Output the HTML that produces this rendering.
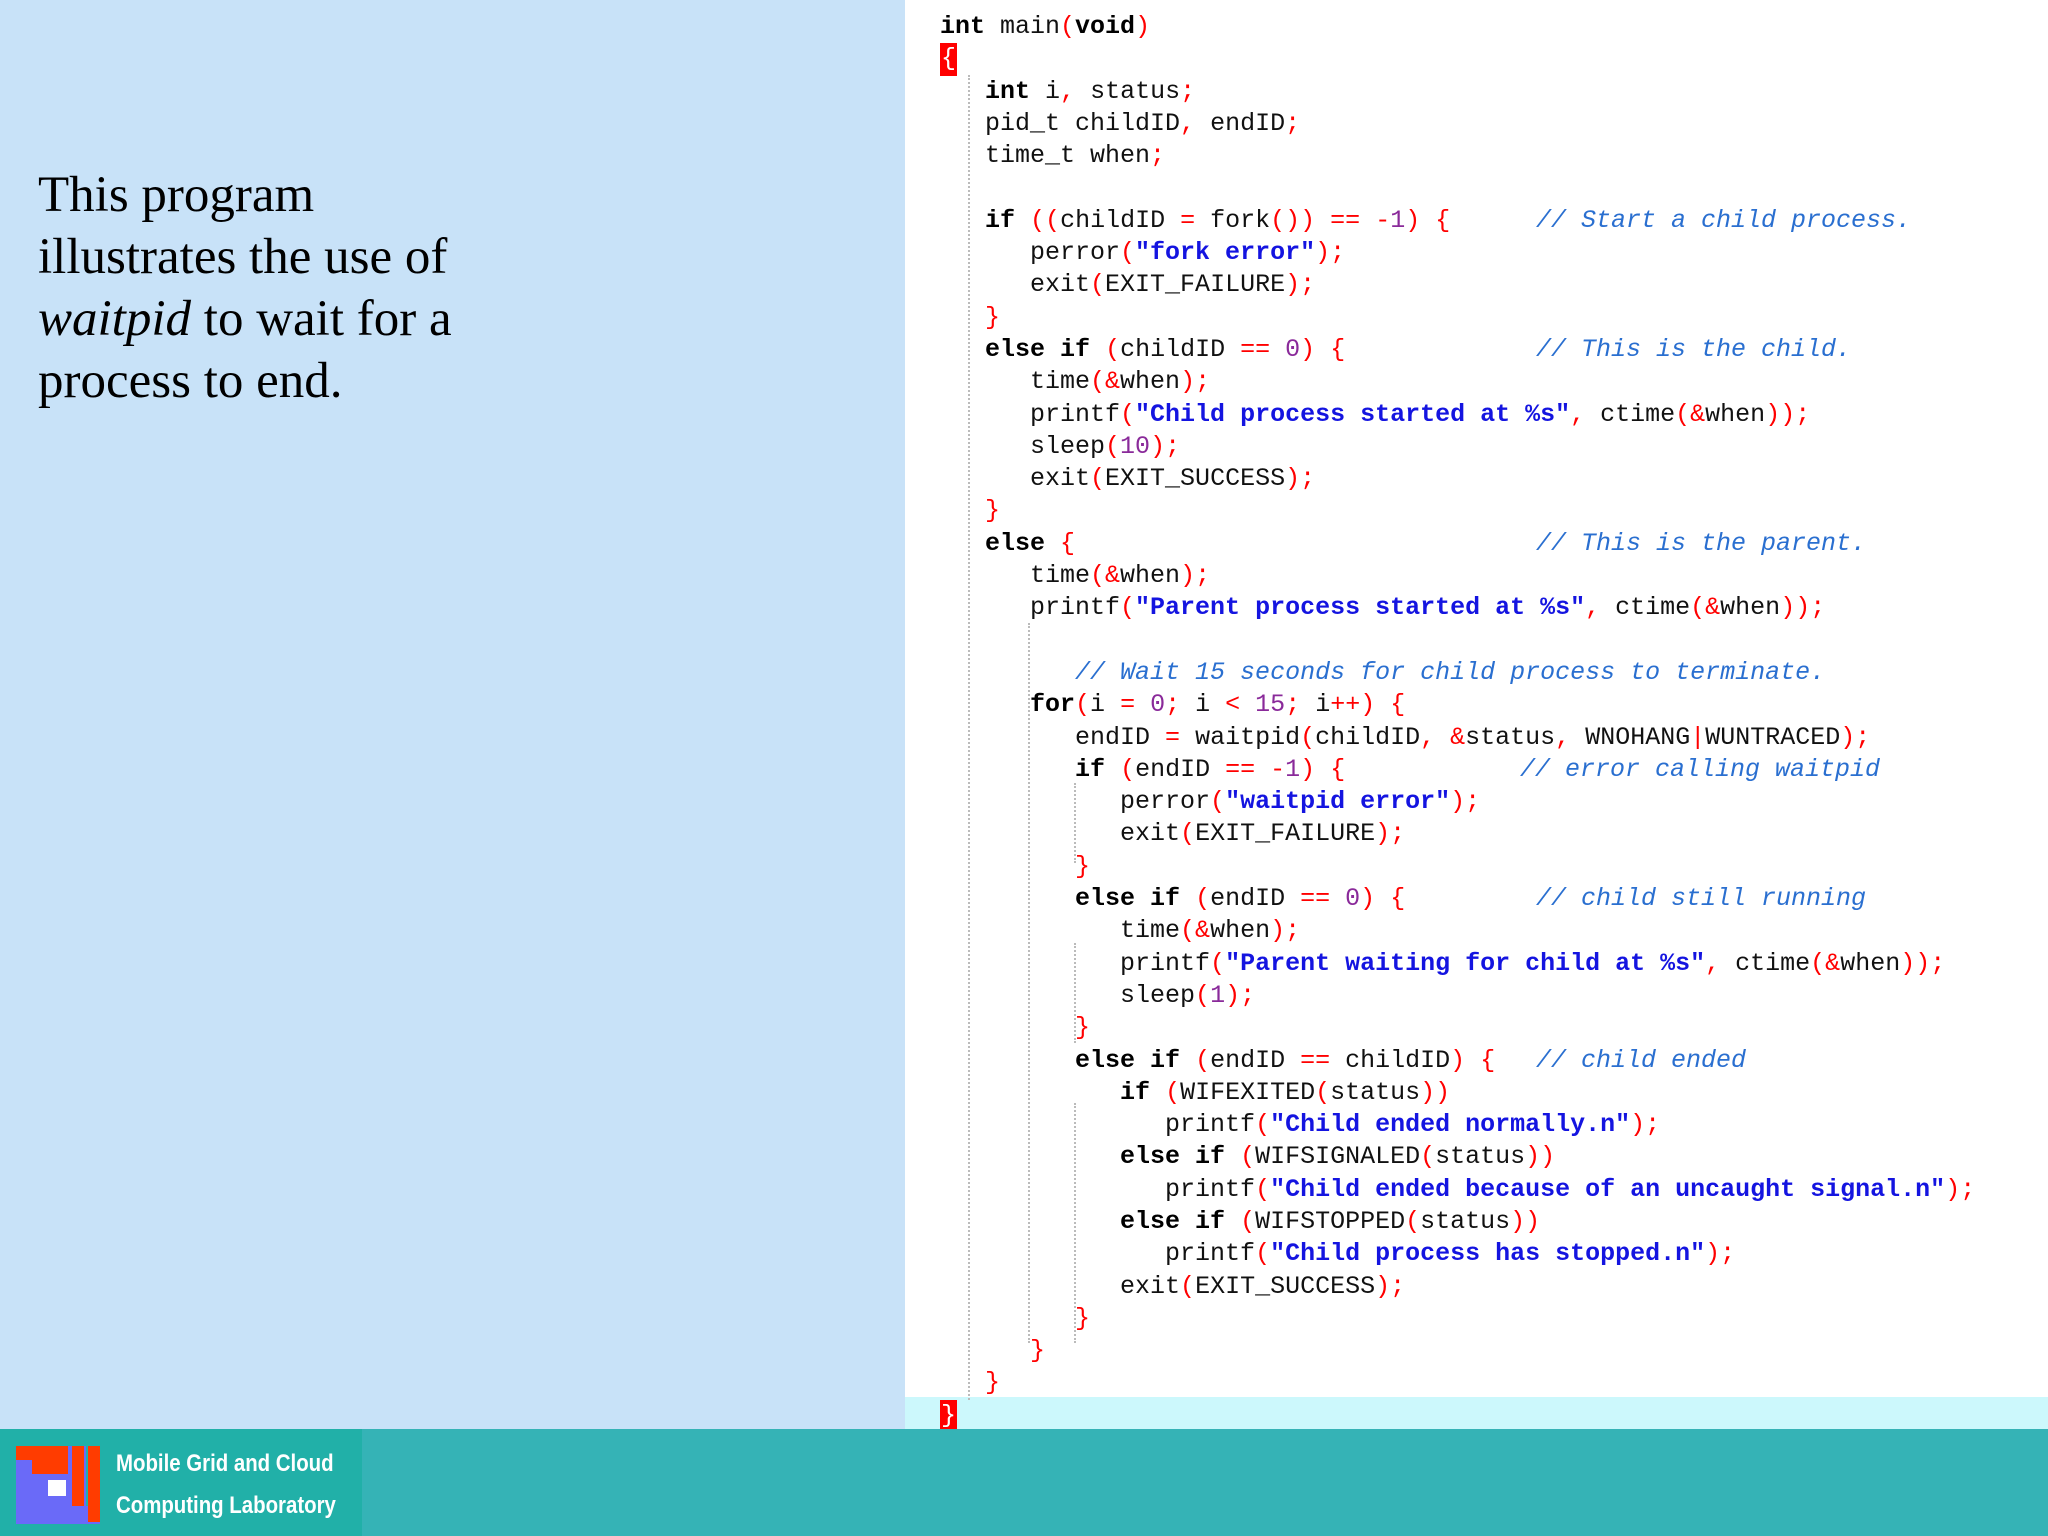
<!DOCTYPE html>
<html><head><meta charset="utf-8"><style>
body{margin:0;width:2048px;height:1536px;position:relative;overflow:hidden;background:#c8e2f8;}
#left{position:absolute;left:38px;top:164px;font-family:"Liberation Serif",serif;font-size:51px;line-height:62px;color:#000;}
#code{position:absolute;left:905px;top:0;width:1143px;height:1431px;background:#fff;}
#cyan{position:absolute;left:905px;top:1397px;width:1143px;height:34px;background:#ccf8fc;}
#src{position:absolute;left:940px;top:11px;margin:0;font-family:"Liberation Mono",monospace;font-size:25px;line-height:32.3px;color:#111;}
.l{position:relative;height:32.3px;white-space:pre;}
.k{font-weight:bold;color:#000}
.p{color:#f00}
.s{color:#1414e0;font-weight:bold}
.n{color:#8a2a9a}
.c{color:#2a6fd0;font-style:italic;position:absolute;top:0}
.rb{background:#f00;color:#fff;display:inline-block;width:17px;text-align:center}
.g{position:absolute;border-left:2px dotted #bbb;}
#foot{position:absolute;left:0;top:1429px;width:2048px;height:107px;background:#35b3b6;}
#logo{position:absolute;left:0;top:1429px;width:362px;height:107px;background:#21b0a8;}
.t{position:absolute;left:116px;color:#fff;font-family:"Liberation Sans Narrow","Liberation Sans",sans-serif;font-weight:bold;font-size:24px;transform:scaleX(0.85);transform-origin:left;}
</style></head><body>
<div id="left">This program<br>illustrates the use of<br><i>waitpid</i> to wait for a<br>process to end.</div>
<div id="code"></div>
<div id="cyan"></div>
<div class="g" style="left:968px;top:75px;height:1325px"></div>
<div class="g" style="left:1028px;top:623px;height:720px"></div>
<div class="g" style="left:1074px;top:783px;height:80px"></div>
<div class="g" style="left:1074px;top:943px;height:100px"></div>
<div class="g" style="left:1074px;top:1103px;height:240px"></div>
<div id="src"><div class="l"><span class="k">int</span> main<span class="p">(</span><span class="k">void</span><span class="p">)</span></div><div class="l"><span class="rb">{</span></div><div class="l">   <span class="k">int</span> i<span class="p">,</span> status<span class="p">;</span></div><div class="l">   pid_t childID<span class="p">,</span> endID<span class="p">;</span></div><div class="l">   time_t when<span class="p">;</span></div><div class="l"> </div><div class="l">   <span class="k">if</span> <span class="p">((</span>childID <span class="p">=</span> fork<span class="p">())</span> <span class="p">==</span> <span class="p">-</span><span class="n">1</span><span class="p">)</span> <span class="p">{</span><span class="c" style="left:596px">// Start a child process.</span></div><div class="l">      perror<span class="p">(</span><span class="s">"fork error"</span><span class="p">);</span></div><div class="l">      exit<span class="p">(</span>EXIT_FAILURE<span class="p">);</span></div><div class="l">   <span class="p">}</span></div><div class="l">   <span class="k">else if</span> <span class="p">(</span>childID <span class="p">==</span> <span class="n">0</span><span class="p">)</span> <span class="p">{</span><span class="c" style="left:596px">// This is the child.</span></div><div class="l">      time<span class="p">(&amp;</span>when<span class="p">);</span></div><div class="l">      printf<span class="p">(</span><span class="s">"Child process started at %s"</span><span class="p">,</span> ctime<span class="p">(&amp;</span>when<span class="p">));</span></div><div class="l">      sleep<span class="p">(</span><span class="n">10</span><span class="p">);</span></div><div class="l">      exit<span class="p">(</span>EXIT_SUCCESS<span class="p">);</span></div><div class="l">   <span class="p">}</span></div><div class="l">   <span class="k">else</span> <span class="p">{</span><span class="c" style="left:596px">// This is the parent.</span></div><div class="l">      time<span class="p">(&amp;</span>when<span class="p">);</span></div><div class="l">      printf<span class="p">(</span><span class="s">"Parent process started at %s"</span><span class="p">,</span> ctime<span class="p">(&amp;</span>when<span class="p">));</span></div><div class="l"> </div><div class="l">         <span class="c" style="position:static">// Wait 15 seconds for child process to terminate.</span></div><div class="l">      <span class="k">for</span><span class="p">(</span>i <span class="p">=</span> <span class="n">0</span><span class="p">;</span> i <span class="p">&lt;</span> <span class="n">15</span><span class="p">;</span> i<span class="p">++)</span> <span class="p">{</span></div><div class="l">         endID <span class="p">=</span> waitpid<span class="p">(</span>childID<span class="p">, &amp;</span>status<span class="p">,</span> WNOHANG<span class="p">|</span>WUNTRACED<span class="p">);</span></div><div class="l">         <span class="k">if</span> <span class="p">(</span>endID <span class="p">==</span> <span class="p">-</span><span class="n">1</span><span class="p">)</span> <span class="p">{</span><span class="c" style="left:580px">// error calling waitpid</span></div><div class="l">            perror<span class="p">(</span><span class="s">"waitpid error"</span><span class="p">);</span></div><div class="l">            exit<span class="p">(</span>EXIT_FAILURE<span class="p">);</span></div><div class="l">         <span class="p">}</span></div><div class="l">         <span class="k">else if</span> <span class="p">(</span>endID <span class="p">==</span> <span class="n">0</span><span class="p">)</span> <span class="p">{</span><span class="c" style="left:596px">// child still running</span></div><div class="l">            time<span class="p">(&amp;</span>when<span class="p">);</span></div><div class="l">            printf<span class="p">(</span><span class="s">"Parent waiting for child at %s"</span><span class="p">,</span> ctime<span class="p">(&amp;</span>when<span class="p">));</span></div><div class="l">            sleep<span class="p">(</span><span class="n">1</span><span class="p">);</span></div><div class="l">         <span class="p">}</span></div><div class="l">         <span class="k">else if</span> <span class="p">(</span>endID <span class="p">==</span> childID<span class="p">)</span> <span class="p">{</span><span class="c" style="left:596px">// child ended</span></div><div class="l">            <span class="k">if</span> <span class="p">(</span>WIFEXITED<span class="p">(</span>status<span class="p">))</span></div><div class="l">               printf<span class="p">(</span><span class="s">"Child ended normally.n"</span><span class="p">);</span></div><div class="l">            <span class="k">else if</span> <span class="p">(</span>WIFSIGNALED<span class="p">(</span>status<span class="p">))</span></div><div class="l">               printf<span class="p">(</span><span class="s">"Child ended because of an uncaught signal.n"</span><span class="p">);</span></div><div class="l">            <span class="k">else if</span> <span class="p">(</span>WIFSTOPPED<span class="p">(</span>status<span class="p">))</span></div><div class="l">               printf<span class="p">(</span><span class="s">"Child process has stopped.n"</span><span class="p">);</span></div><div class="l">            exit<span class="p">(</span>EXIT_SUCCESS<span class="p">);</span></div><div class="l">         <span class="p">}</span></div><div class="l">      <span class="p">}</span></div><div class="l">   <span class="p">}</span></div><div class="l"><span class="rb">}</span></div></div>
<div id="foot"></div>
<div id="logo">
  <div style="position:absolute;left:16px;top:17px;width:84px;height:78px;background:#6a6af8"></div>
  <div style="position:absolute;left:16px;top:17px;width:52px;height:14px;background:#ff3c00"></div>
  <div style="position:absolute;left:32px;top:31px;width:36px;height:14px;background:#ff3c00"></div>
  <div style="position:absolute;left:72px;top:17px;width:12px;height:60px;background:#ff3c00"></div>
  <div style="position:absolute;left:86px;top:17px;width:14px;height:60px;background:#21b0a8"></div>
  <div style="position:absolute;left:88px;top:17px;width:12px;height:76px;background:#ff3c00"></div>
  <div style="position:absolute;left:48px;top:51px;width:18px;height:16px;background:#fff"></div>
</div>
<div class="t" style="top:1450px">Mobile Grid and Cloud</div>
<div class="t" style="top:1492px">Computing Laboratory</div>
</body></html>
